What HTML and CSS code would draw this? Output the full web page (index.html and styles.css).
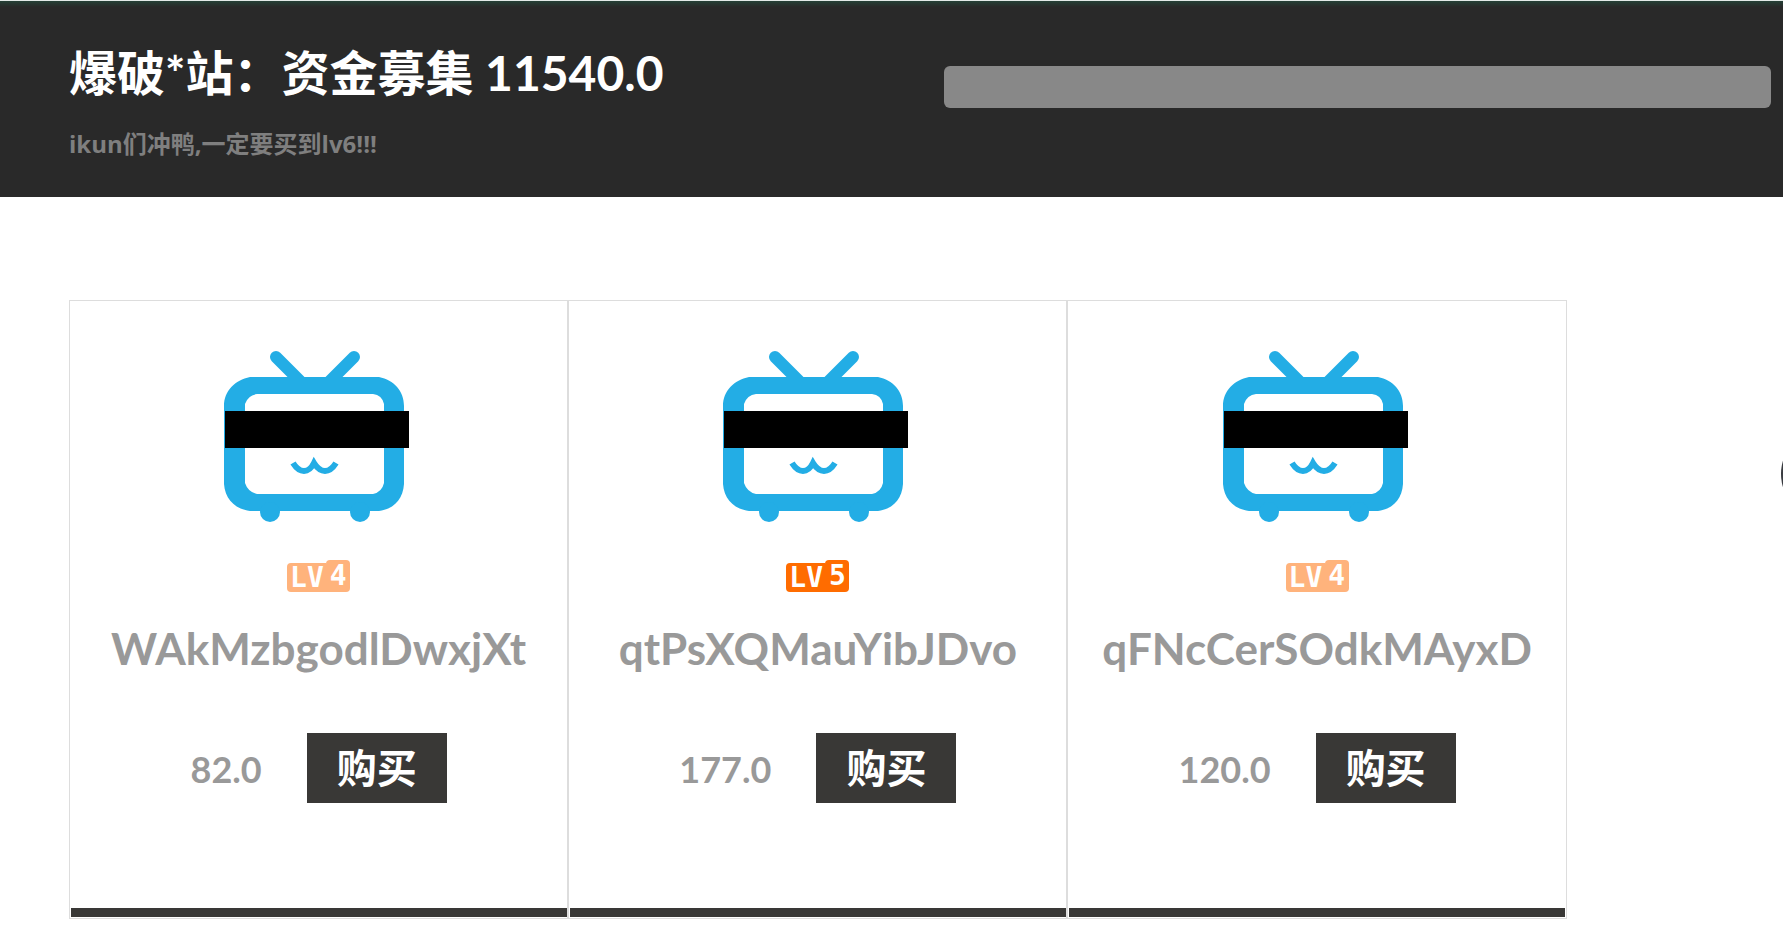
FILE: index.html
```
<!DOCTYPE html>
<html lang="zh-CN">
	<head>
		<meta charset="UTF-8">
		<title>资金募集</title>
		<link rel="stylesheet" href="styles.css">
	</head>
	<body>
		<svg class="defs" aria-hidden="true">
			<symbol id="tv" viewBox="0 0 191 173">
				<g fill="none" stroke="#23ade5">
					<path d="M53 7L77 31M131 7L107 31" stroke-width="12" stroke-linecap="round"/>
					<path d="M70 113Q75 121 81 121Q87 121 91 113Q96 121 102 121Q108 121 113 113" stroke-width="6"/>
				</g>
				<path fill="#23ade5" fill-rule="evenodd" d="M27 27H156C171 30 181 41 181 56V134C180 149 171 159 156 161H27C12 159 2 149 1 134V56C1 41 12 30 27 27ZM34 44Q25 45 22 54V133Q25 142 34 144H150Q159 142 161 133V54Q159 45 150 44Z"/>
				<circle cx="47" cy="162" r="10" fill="#23ade5"/>
				<circle cx="137" cy="162" r="10" fill="#23ade5"/>
				<rect x="2" y="61" width="184" height="37"/>
			</symbol>
		</svg>
		<header class="header">
			<div class="intro">
				<h1 class="title">爆破*站：资金募集 11540.0</h1>
				<p class="subtitle">ikun们冲鸭,一定要买到lv6!!!</p>
			</div>
			<progress class="fund" value="0" max="100" aria-label="资金募集"></progress>
		</header>
		<ul class="list">
			<li class="item">
				<svg class="avatar" aria-hidden="true"><use href="#tv"/></svg>
				<div class="level lv4"><span>LV</span><b>4</b></div>
				<h2 class="name">WAkMzbgodlDwxjXt</h2>
				<div class="buy">
					<span class="price">82.0</span>
					<button class="btn" type="button">购买</button>
				</div>
			</li>
			<li class="item">
				<svg class="avatar" aria-hidden="true"><use href="#tv"/></svg>
				<div class="level lv5"><span>LV</span><b>5</b></div>
				<h2 class="name">qtPsXQMauYibJDvo</h2>
				<div class="buy">
					<span class="price">177.0</span>
					<button class="btn" type="button">购买</button>
				</div>
			</li>
			<li class="item">
				<svg class="avatar" aria-hidden="true"><use href="#tv"/></svg>
				<div class="level lv4"><span>LV</span><b>4</b></div>
				<h2 class="name">qFNcCerSOdkMAyxD</h2>
				<div class="buy">
					<span class="price">120.0</span>
					<button class="btn" type="button">购买</button>
				</div>
			</li>
		</ul>
		<div class="float"></div>
	</body>
</html>
```
FILE: styles.css
```
*{
	padding: 0;
	margin: 0;
	box-sizing: border-box;
}
body{
	font-family: Lato, "Noto Sans CJK SC", sans-serif;
	background: #fff;
	overflow-x: hidden;
}
ul{
	list-style: none;
}
.defs{
	display: block;
	width: 0;
	height: 0;
}
.header{
	display: flex;
	justify-content: space-between;
	align-items: flex-start;
	padding: 48px 12px 41px 69px;
	border-top: 1px solid #e4eae8;
	background: linear-gradient(#254036, #292929 6px);
}
.title{
	font-size: 48px;
	line-height: 48px;
	font-weight: bold;
	color: #fff;
}
.subtitle{
	margin-top: 35px;
	font-family: "Open Sans", "Noto Sans CJK SC", sans-serif;
	font-size: 24px;
	line-height: 24px;
	font-weight: bold;
	color: #7f7f7f;
}
.fund{
	appearance: none;
	width: 49%;
	max-width: 827px;
	height: 42px;
	margin-top: 17px;
	border: 0;
	border-radius: 6px;
	background: #888;
	overflow: hidden;
}
.fund::-webkit-progress-bar{
	background: #888;
}
.list{
	display: grid;
	grid-template-columns: repeat(3, 1fr);
	width: 84%;
	margin: 103px 0 27px 69px;
}
.item{
	display: flex;
	flex-direction: column;
	align-items: center;
	padding: 49px 0 1px;
	border: 1px solid #ddd;
}
.item::after{
	content: "";
	align-self: stretch;
	height: 9px;
	margin: 105px 0 0 1px;
	background: #393836;
}
.item:last-child::after{
	margin-right: 1px;
}
.avatar{
	width: 191px;
	height: 173px;
}
.level{
	display: flex;
	align-items: flex-end;
	margin-top: 37px;
	font-family: "DejaVu Sans Mono", monospace;
	font-size: 28px;
	font-weight: bold;
	color: #fff;
}
.level span{
	width: 39px;
	height: 29px;
	padding-left: 3px;
	line-height: 29px;
	border-radius: 4px 0 0 4px;
}
.level b{
	width: 24px;
	height: 32px;
	line-height: 32px;
	text-align: center;
	border-radius: 4px 4px 4px 0;
}
.lv4 span, .lv4 b{
	background: #ffb37c;
}
.lv5 span, .lv5 b{
	background: #ff6c00;
}
.name{
	margin-top: 28px;
	font-size: 44px;
	line-height: 56px;
	font-weight: bold;
	color: #999;
}
.buy{
	display: flex;
	align-items: center;
	gap: 45px;
	margin-top: 57px;
}
.price{
	padding-top: 2px;
	font-size: 36px;
	font-weight: bold;
	color: #999;
}
.btn{
	padding: 15px 30px;
	border: 0;
	font-family: inherit;
	font-size: 40px;
	line-height: 40px;
	font-weight: bold;
	color: #fff;
	background: #393836;
	cursor: pointer;
}
/* round handle tucked behind the right edge */
.float{
	position: fixed;
	right: -88px;
	top: 429px;
	width: 90px;
	height: 90px;
	border-radius: 50%;
	background: #393b40;
}
```
